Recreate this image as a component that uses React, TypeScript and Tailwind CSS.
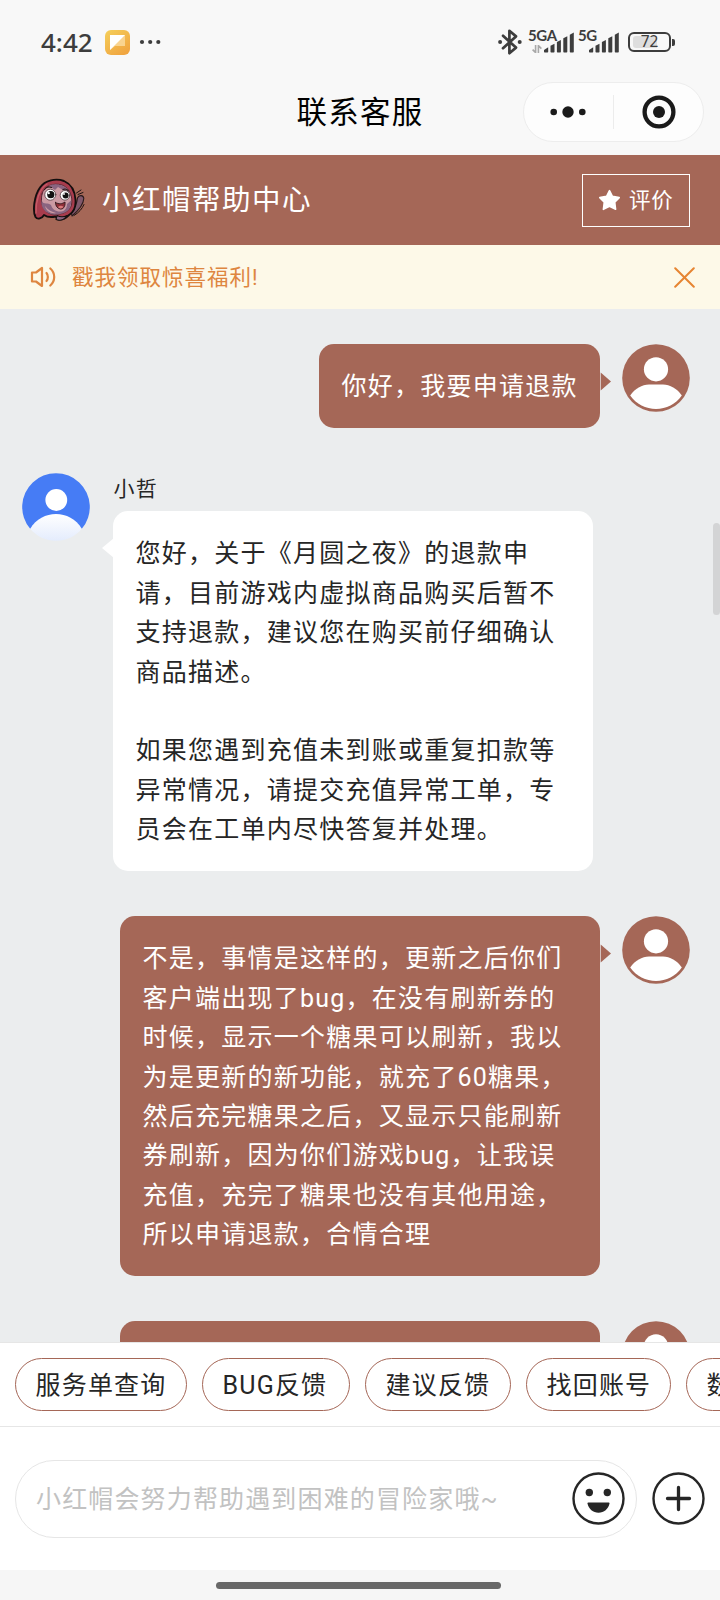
import type { ReactNode } from 'react';

type TMessage = {
    from: 'me' | 'agent';
    name?: string;
    lines: string[];
}

const messages: TMessage[] = [
    { from: 'me', lines: ['你好，我要申请退款'] },
    {
        from: 'agent',
        name: '小哲',
        lines: [
            '您好，关于《月圆之夜》的退款申',
            '请，目前游戏内虚拟商品购买后暂不',
            '支持退款，建议您在购买前仔细确认',
            '商品描述。',
            '',
            '如果您遇到充值未到账或重复扣款等',
            '异常情况，请提交充值异常工单，专',
            '员会在工单内尽快答复并处理。',
        ],
    },
    {
        from: 'me',
        lines: [
            '不是，事情是这样的，更新之后你们',
            '客户端出现了bug，在没有刷新券的',
            '时候，显示一个糖果可以刷新，我以',
            '为是更新的新功能，就充了60糖果，',
            '然后充完糖果之后，又显示只能刷新',
            '券刷新，因为你们游戏bug，让我误',
            '充值，充完了糖果也没有其他用途，',
            '所以申请退款，合情合理',
        ],
    },
    { from: 'me', lines: ['', ''] },
];

const quickReplies = [
    { label: '服务单查询', width: 'w-[172px]' },
    { label: 'BUG反馈', width: 'w-[148px]' },
    { label: '建议反馈', width: 'w-[146px]' },
    { label: '找回账号', width: 'w-[145px]' },
    { label: '数', width: 'w-[145px]' },
];

const BluetoothIcon = () => (
    <svg width="24" height="26" viewBox="0 0 24 26" fill="none" stroke="#3d3d3d" strokeWidth="2.7" strokeLinejoin="round" strokeLinecap="round">
        <path d="M5 6.8 L18 18.6 L11.4 24.2 V1.8 L18 7.4 L5 19.2" />
        <circle cx="2.1" cy="13" r="2" fill="#3d3d3d" stroke="none" />
        <circle cx="21.7" cy="13" r="2" fill="#3d3d3d" stroke="none" />
    </svg>
);

const Signal = ({ label, arrows, className }: { label: string; arrows?: boolean; className: string }) => (
    <div className={`relative flex h-[22px] justify-end ${className}`}>
        <span className="absolute top-[-4px] left-0 font-[Lato] text-[15px] leading-[16px] font-bold tracking-[-0.4px]">{label}</span>
        {arrows && (
            <svg className="absolute top-[14px] left-[4px]" width="10" height="8" viewBox="0 0 10 8" fill="none" stroke="#a8a8a8" strokeWidth="1.6">
                <path d="M3.6 0 V7.6 L0.6 4.6 M6.4 8 V0.6 L9.4 3.6" />
            </svg>
        )}
        <svg width="30" height="22" viewBox="0 0 30 22" fill="#3d3d3d">
            <path d="M0 20.800 V19 L4.200 16.300 V20.800 Q4.200 21.500 3.500 21.500 H0.700 Q0 21.500 0 20.800 Z" />
            <path d="M6.500 14.700 L10.500 12.700 V20.800 Q10.500 21.500 9.800 21.500 H7.200 Q6.500 21.500 6.500 20.800 Z" />
            <path d="M12.900 11 L16.900 9 V20.800 Q16.900 21.500 16.200 21.500 H13.600 Q12.900 21.500 12.900 20.800 Z" />
            <path d="M19.300 7.300 L23.300 5.300 V20.800 Q23.300 21.500 22.600 21.500 H20 Q19.300 21.500 19.300 20.800 Z" />
            <path d="M25.800 3.800 L29.800 1.600 V20.800 Q29.800 21.500 29.100 21.500 H26.500 Q25.800 21.500 25.800 20.800 Z" />
        </svg>
    </div>
);

const StatusBar = () => (
    <div className="flex h-[84px] items-center pl-[41px] pr-[45px] font-['Noto_Sans'] text-[#3d3d3d]">
        <span className="text-[26px] leading-none font-medium">4:42</span>
        <svg className="ml-[12px]" width="25" height="25" viewBox="0 0 25 25">
            <defs>
                <linearGradient id="note" x1="0" y1="0" x2="0.7" y2="1">
                    <stop offset="0" stopColor="#f5cf5b" />
                    <stop offset="1" stopColor="#f0a540" />
                </linearGradient>
            </defs>
            <rect width="25" height="25" rx="6" fill="url(#note)" />
            <path d="M5 5 H20 V16 H10 L5 20 Z" fill="#f9d490" />
            <path d="M5 5 H20 L5 20 Z" fill="#ffffff" />
        </svg>
        <svg className="ml-[9px]" width="22" height="6" viewBox="0 0 22 6" fill="#3d3d3d">
            <circle cx="3" cy="3" r="2.1" />
            <circle cx="11.200" cy="3" r="2.1" />
            <circle cx="19.300" cy="3" r="2.1" />
        </svg>
        <div className="ml-auto flex items-center">
            <BluetoothIcon />
            <Signal label="5GA" arrows className="ml-[6px] w-[46px]" />
            <Signal label="5G" className="ml-[4px] w-[41px]" />
            <div className="relative ml-[9px] flex h-[20px] w-[43px] items-center justify-center rounded-[6px] border-2 border-[#3d3d3d]">
                <div className="absolute top-[2px] left-[3px] h-[12px] w-[24px] rounded-l-[3px] bg-[#dedede]" />
                <span className="relative text-[15.5px] leading-none">72</span>
            </div>
            <div className="ml-[1px] h-[7px] w-[3px] rounded-r-[2px] bg-[#3d3d3d]" />
        </div>
    </div>
);

const NavBar = () => (
    <div className="relative flex h-[71px] items-start justify-center">
        <h1 className="mt-[7px] text-[30.5px] leading-[44px] tracking-[1.3px] text-black">联系客服</h1>
        <div className="absolute top-[-2px] right-[16px] flex h-[60px] w-[181px] items-center rounded-full border border-[#ededed] bg-[#fdfdfd]">
            <div className="flex flex-1 justify-center pr-px">
                <svg width="36" height="12" viewBox="0 0 36 12" fill="#1a1a1a">
                    <circle cx="3.700" cy="6" r="3.300" />
                    <circle cx="18" cy="6" r="5.700" />
                    <circle cx="32.300" cy="6" r="3.300" />
                </svg>
            </div>
            <div className="h-[34px] w-px bg-[#ececec]" />
            <div className="flex flex-1 justify-center pl-[2px]">
                <svg width="34" height="34" viewBox="0 0 34 34">
                    <circle cx="17" cy="17" r="14.400" fill="none" stroke="#1a1a1a" strokeWidth="4.300" />
                    <circle cx="17" cy="17" r="6" fill="#1a1a1a" />
                </svg>
            </div>
        </div>
    </div>
);

const Mascot = () => (
    <svg width="53" height="45" viewBox="0 0 53 45" strokeLinejoin="round" strokeLinecap="round">
        {/* waving hand */}
        <path d="M38 33 C42 30 44 25 44.500 20 C46 16.500 50.500 17 50.800 20.500 C50.500 26 46 32 39 38 Z" fill="#80586b" stroke="#2a191c" strokeWidth="1.100" />
        <path d="M43.500 15 L48 12 M45 16.500 L50 14.500 M41 37.500 C46 34.500 49 31 51 26.500" fill="none" stroke="#1d1212" strokeWidth="1" />
        {/* hood */}
        <path d="M2.500 39 C-0.500 33 1 18 7 9.500 C12 2 23 0 31 3 C38 6 42 13 42.500 22 C43 29 41 34 36 37 C33 40 30 42 25 41.500 L22.500 38.500 C18 39.500 14 39 11 37 C9 40.500 4.500 42 2.500 39 Z" fill="#a83c4d" stroke="#140e0e" strokeWidth="1.900" />
        <path d="M3 35 C2.500 24 6 11 14 6" fill="none" stroke="#c65b66" strokeWidth="1.400" />
        {/* face */}
        <path d="M9 16 C11 8 20 4.500 29 7 C37 10 40 19 38.500 27 C36.500 34.500 27 37.500 18 36 C10 34 7 25 9 16 Z" fill="#cb9aa3" stroke="#5a2734" strokeWidth="1" />
        <path d="M16 7.500 C25 4 36 8 38.500 19 L36.500 13.500 L30 12 L25 9 L22 12 Z" fill="#8a6480" />
        <path d="M8.500 23 C11 27 15 24 18 27 C19 31 23 34 28 33.500 C32 33 34 30 34 26 L38 22.500 C39 32 32 37 21 36.500 C12 35.500 8 30 8.500 23 Z" fill="#8a6480" />
        <path d="M12 28 C15 32 19 34 23 35 C18 36 13 33 12 28 Z" fill="#cb9aa3" />
        <path d="M22.500 24.500 C26 26.500 29 26 32 24 C32.500 29 30 31.500 27 31 C24 30 22.500 28 22.500 24.500 Z" fill="#8e2f38" stroke="#32191d" strokeWidth="0.900" />
        <path d="M25 29 C26.500 27.500 29 27.500 30.500 28.800 C29.500 31 26.500 31 25 29 Z" fill="#d9777a" />
        <path d="M11.500 11.500 C13 9.500 16 8.500 18.500 9.500 M30 11.500 C32 10.500 34.500 11.500 35.500 13" fill="none" stroke="#2b1b1b" strokeWidth="1.200" />
        <circle cx="17.300" cy="16.700" r="5.500" fill="#fff" stroke="#3a2529" strokeWidth="0.700" />
        <circle cx="32" cy="17.300" r="4.800" fill="#fff" stroke="#3a2529" strokeWidth="0.700" />
        <circle cx="17.800" cy="16.700" r="3.600" fill="#111" />
        <circle cx="32.600" cy="17.500" r="3" fill="#111" />
        <circle cx="15.800" cy="15.200" r="1.100" fill="#fff" />
        <circle cx="31" cy="16" r="0.900" fill="#fff" />
        <path d="M23 41.500 L24 37.500 C28 39.500 32 38.500 34 37.500 C33 41 28 43.500 23 41.500 Z" fill="#8a6480" stroke="#17100f" strokeWidth="1.100" />
    </svg>
);

const ServiceHeader = () => (
    <div className="flex h-[90px] items-center bg-[#a56757] pr-[30px] pl-[33px] text-white">
        <Mascot />
        <span className="mt-[3px] ml-[16px] text-[28.5px] leading-none tracking-[1.5px]">小红帽帮助中心</span>
        <button className="ml-auto flex h-[53px] w-[108px] items-center border border-white pl-[15px]">
            <svg width="23" height="22" viewBox="0 0 23 22" fill="#fff" stroke="#fff" strokeWidth="1.600" strokeLinejoin="round">
                <path d="M11.500 1.600 L14.400 7.300 L21.200 8.600 L16.700 13.200 L17.600 20.300 L11.500 17.400 L5.400 20.300 L6.300 13.200 L1.800 8.600 L8.600 7.300 Z" />
            </svg>
            <span className="mt-[2px] ml-[8px] text-[21.5px] leading-none tracking-[0.8px]">评价</span>
        </button>
    </div>
);

const NoticeBar = () => (
    <div className="flex h-[64px] items-center bg-[#fdf9e8] pr-[25px] pl-[30px] text-[#de8640]">
        <svg width="26" height="22" viewBox="0 0 26 22" fill="none" stroke="#de8640" strokeWidth="2.200" strokeLinejoin="round" strokeLinecap="round">
            <path d="M2 6.500 H6 L12 2 V20 L6 15.500 H2 Z" />
            <path d="M16.500 7 C18.300 9 18.300 13 16.500 15 M20.300 2.500 C25.500 7 25.500 15 20.300 19.500" />
        </svg>
        <span className="mt-px ml-[16px] text-[21.5px] leading-none tracking-[1px]">戳我领取惊喜福利!</span>
        <svg className="ml-auto" width="21" height="21" viewBox="0 0 21 21" stroke="#e68532" strokeWidth="2" strokeLinecap="round">
            <path d="M1.200 1.200 L19.800 19.800 M19.800 1.200 L1.200 19.800" />
        </svg>
    </div>
);

const UserAvatar = () => (
    <svg className="shrink-0" width="68" height="68" viewBox="0 0 68 68">
        <circle cx="34" cy="34" r="33.800" fill="#a56757" />
        <circle cx="34" cy="25.300" r="12.100" fill="#fff" />
        <path d="M8.200 51.500 C13 44.500 20 40.500 27 40.500 H41 C48 40.500 55 44.500 59.800 51.500 C54 60 44 65 34 65 C24 65 14 60 8.200 51.500 Z" fill="#fff" />
    </svg>
);

const AgentAvatar = () => (
    <svg className="shrink-0" width="68" height="68" viewBox="0 0 68 68">
        <defs>
            <linearGradient id="body" x1="0" y1="0" x2="0" y2="1">
                <stop offset="0" stopColor="#ffffff" />
                <stop offset="1" stopColor="#e4ecfd" />
            </linearGradient>
        </defs>
        <path d="M8.200 55.800 A33.800 33.800 0 1 1 59.800 55.800 L34 52 Z" fill="#467cf5" />
        <path d="M8.200 55.800 C14 46 24 41 34 41 C44 41 54 46 59.800 55.800 C53.500 63.500 44 67.800 34 67.800 C24 67.800 14.500 63.500 8.200 55.800 Z" fill="url(#body)" />
        <circle cx="34.300" cy="27" r="10.900" fill="#fff" />
    </svg>
);

const Bubble = ({ className, children }: { className: string; children: ReactNode }) => (
    <div className={`relative rounded-[15px] pt-[23px] pb-[22px] pl-[23px] text-[25px] leading-[39.375px] tracking-[1.25px] whitespace-nowrap ${className}`}>
        {children}
    </div>
);

const Lines = ({ lines }: { lines: string[] }) => (
    <>
        {lines.map((line, i) => <p key={i} className="min-h-[39.375px]">{line}</p>)}
    </>
);

const MessageRow = ({ message }: { message: TMessage }) => {
    if (message.from === 'agent') {
        return (
            <div className="flex items-start gap-[22.5px] pl-[22px]">
                <AgentAvatar />
                <div>
                    <p className="flex h-[38px] items-center pb-[6px] pl-px text-[21px] leading-none tracking-[1.2px] text-[#262626]">{message.name}</p>
                    <Bubble className="w-[480.5px] bg-white text-[#262626]">
                        <svg className="absolute top-[27px] left-[-11px]" width="12" height="20" viewBox="0 0 12 20" fill="#fff">
                            <path d="M12 0 V20 L0 10 Z" />
                        </svg>
                        <Lines lines={message.lines} />
                    </Bubble>
                </div>
            </div>
        );
    }
    const long = message.lines.length > 1;
    return (
        <div className="flex items-start justify-end gap-[22px] pr-[30px]">
            <Bubble className={`bg-[#a56757] text-white ${long ? 'w-[480.5px]' : 'w-[281.5px]'}`}>
                <svg className="absolute top-[28px] right-[-11px]" width="11" height="20" viewBox="0 0 11 20" fill="#a56757">
                    <path d="M0.700 0.500 V18.500 L11 9.500 Z" />
                </svg>
                <Lines lines={message.lines} />
            </Bubble>
            <UserAvatar />
        </div>
    );
};

const QuickReplies = () => (
    <div className="flex h-[85px] items-center gap-[15px] overflow-hidden border-t border-b border-[#e6e6e6] bg-white pl-[15px]">
        {quickReplies.map((item) => (
            <button
                key={item.label}
                className={`flex h-[53px] shrink-0 items-center rounded-full border border-[#a56757] pt-[2px] pl-[19.500px] text-[25px] leading-none tracking-[1.2px] whitespace-nowrap text-[#262626] ${item.width}`}
            >
                {item.label}
            </button>
        ))}
    </div>
);

const InputBar = () => (
    <div className="flex h-[143px] items-center gap-[15px] bg-white pl-[15px]">
        <div className="flex h-[78px] w-[622px] items-center rounded-full border border-[#e6e6e6] pr-[11px] pl-[20px]">
            <span className="mt-[2px] text-[25px] leading-none tracking-[1.15px] text-[#c2c2c2]">小红帽会努力帮助遇到困难的冒险家哦~</span>
            <svg className="ml-auto" width="53" height="53" viewBox="0 0 53 53" fill="#262626">
                <circle cx="26.500" cy="26.500" r="25" fill="none" stroke="#262626" strokeWidth="2.400" />
                <circle cx="17.300" cy="20.500" r="3.700" />
                <circle cx="35.300" cy="20.500" r="3.700" />
                <path d="M16.300 30.500 H36.700 Q37.600 30.500 37.500 31.500 C36.300 37 32 40.800 26.500 40.800 C21 40.800 16.700 37 15.500 31.500 Q15.400 30.500 16.300 30.500 Z" />
            </svg>
        </div>
        <svg width="53" height="53" viewBox="0 0 53 53" fill="none" stroke="#262626">
            <circle cx="26.500" cy="26.500" r="25" strokeWidth="2.400" />
            <path d="M15.500 26.500 H37.500 M26.500 15.500 V37.500" strokeWidth="3.300" strokeLinecap="round" />
        </svg>
    </div>
);

const App = () => {
    return (
        <div className="flex h-[1600px] w-[720px] flex-col overflow-hidden bg-[#f8f8f8] font-[Roboto,'Noto_Sans_CJK_SC',sans-serif]">
            <StatusBar />
            <NavBar />
            <ServiceHeader />
            <NoticeBar />
            <div className="relative min-h-0 flex-1 overflow-hidden bg-[#ebedee]">
                <div className="flex flex-col gap-[45px] pt-[35px]">
                    {messages.map((message, i) => <MessageRow key={i} message={message} />)}
                </div>
                <div className="absolute top-[214px] right-0 h-[92px] w-[7.5px] rounded-[4px] bg-[#d3d4d5]" />
            </div>
            <QuickReplies />
            <InputBar />
            <div className="flex h-[30px] items-start justify-center bg-[#f6f6f6] pt-[12px] pr-[4px]">
                <div className="h-[7px] w-[285px] rounded-full bg-[#686868]" />
            </div>
        </div>
    )
}

export default App;
